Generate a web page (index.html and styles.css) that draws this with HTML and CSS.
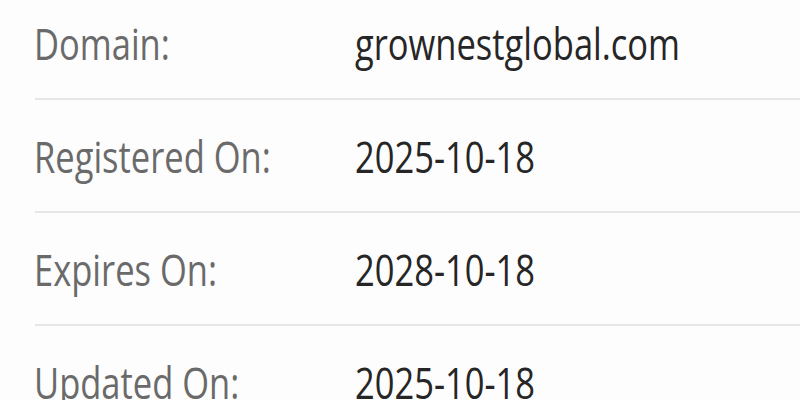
FILE: index.html
```html
<!DOCTYPE html>
<html lang="en">
<head>
<meta charset="utf-8">
<title>Domain info</title>
<link rel="stylesheet" href="styles.css">
</head>
<body>
<div class="info">
  <div class="row"><span class="label">Domain:</span><span class="value">grownestglobal.com</span></div>
  <div class="row"><span class="label">Registered On:</span><span class="value">2025-10-18</span></div>
  <div class="row"><span class="label">Expires On:</span><span class="value">2028-10-18</span></div>
  <div class="row"><span class="label">Updated On:</span><span class="value">2025-10-18</span></div>
</div>
</body>
</html>
```
FILE: styles.css
```css
html, body {
  margin: 0;
  padding: 0;
  background: #fdfdfd;
  overflow: hidden;
}
body {
  width: 800px;
  height: 400px;
  font-family: "Open Sans", "Noto Sans", sans-serif;
}
.info {
  padding-left: 35px;
}
.row {
  box-sizing: border-box;
  height: 113px;
  display: grid;
  grid-template-columns: 320px 1fr;
  align-items: end;
  padding-bottom: 34px;
  border-bottom: 2px solid #e6e6e6;
}
.row:first-child {
  height: 100px;
}
.label, .value {
  display: inline-block;
  font-size: 34.5px;
  line-height: 1;
  white-space: nowrap;
  transform-origin: 0 30.6px;
  transform: scaleY(1.27);
}
.label {
  color: #6a6a6a;
  margin-left: -1px;
}
.value {
  color: #262626;
}
```
